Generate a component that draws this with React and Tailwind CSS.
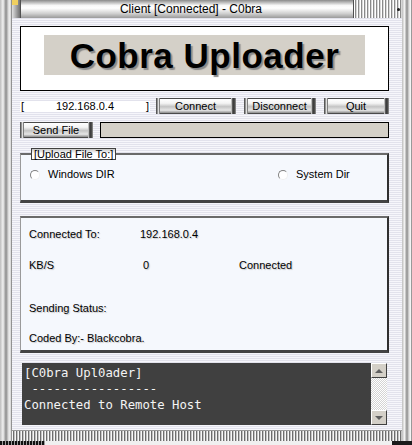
import React from "react";

/* chrome-ish skinned button (caps + gradient body) */
function SkinButton({ label, className }) {
    return (
        <div className={`flex h-[16px] ${className}`}>
            <span className="w-[4px] bg-[linear-gradient(90deg,#3a3a3a,#9a9a9a_40%,#e8e8e8_60%,#505050)]" />
            <span className="flex-1 flex items-center justify-center border-y border-[#4a4a4a] bg-[linear-gradient(#ffffff,#f4f4f4_30%,#c4c4c4_55%,#e6e6e6_80%,#8a8a8a)] text-[11px] leading-none text-black">
                {label}
            </span>
            <span className="w-[5px] bg-[linear-gradient(90deg,#f0f0f0,#5a5a5a_30%,#303030_60%,#9a9a9a)]" />
        </div>
    );
}

function Radio({ label, className = "" }) {
    return (
        <div className={`flex items-center gap-[8px] ${className}`}>
            <span className="w-[10px] h-[10px] rounded-full bg-white border border-t-[#808080] border-l-[#808080] border-r-[#f0f0f0] border-b-[#f0f0f0]" />
            <span className="text-[11px] leading-none text-black">{label}</span>
        </div>
    );
}

export default function App() {
    const sideBorder =
        "bg-[linear-gradient(90deg,#bdbdbd,#f2f2f2_25%,#8c8c8c_50%,#dcdcdc_70%,#f4f4f4_85%,#6c6c6c)]";

    return (
        <div className="w-[412px] h-[445px] flex flex-col bg-[#1a1a1a] overflow-hidden font-['Liberation_Sans',Arial,sans-serif]">
            {/* ===== Title bar ===== */}
            <div className="h-[18px] flex shrink-0">
                <div className={`w-[12px] ${sideBorder}`} />
                <div className="w-[8px] flex flex-col bg-[linear-gradient(90deg,#e0e0e0,#707070)]">
                    <span className="h-[5px] w-[6px] bg-[#f0d060]" />
                </div>
                <div className="flex-1 flex items-center justify-center pl-[8px] border-x border-[#505050] bg-[linear-gradient(#8a8a8a,#f8f8f8_30%,#ffffff_45%,#d0d0d0_75%,#9a9a9a)] text-[12px] leading-none text-black">
                    Client [Connected] - C0bra
                </div>
                <div className="w-[48px] flex items-center justify-end pr-[2px] bg-[repeating-linear-gradient(90deg,#ffffff_0px,#ffffff_1px,#8a8a8a_1px,#8a8a8a_2px,#d8d8d8_2px,#d8d8d8_3px)]">
                    <span className="w-[3px] h-[3px] rounded-full bg-[#202020]" />
                </div>
                <div className={`w-[10px] ${sideBorder}`} />
            </div>

            {/* ===== Body ===== */}
            <div className="h-[423px] flex shrink-0">
                <div className={`w-[12px] ${sideBorder}`} />

                <div className="flex-1 flex flex-col bg-[repeating-linear-gradient(180deg,#e2e2ec_0px,#e2e2ec_1px,#f6f6fb_1px,#f6f6fb_2px)]">
                    <div className="flex flex-col pl-[8px] pr-[13px] pt-[8px]">
                        {/* logo */}
                        <div className="h-[65px] border border-black bg-white flex justify-center pt-[8px]">
                            <div className="w-[321px] h-[40px] bg-[#d4d0c8] flex items-center justify-center">
                                <span className="font-bold text-[35px] leading-none tracking-[0.5px] text-black [text-shadow:2px_2px_1px_#8a8a8a]">
                                    Cobra Uploader
                                </span>
                            </div>
                        </div>

                        {/* ip + buttons */}
                        <div className="mt-[7px] h-[16px] flex items-center">
                            <div className="w-[130px] h-[11px] bg-white flex items-center justify-between text-[11px] leading-none text-black">
                                <span className="pl-[1px]">[</span>
                                <span>192.168.0.4</span>
                                <span className="pr-[1px]">]</span>
                            </div>
                            <SkinButton label="Connect" className="ml-[6px] w-[80px]" />
                            <SkinButton label="Disconnect" className="ml-[8px] w-[72px]" />
                            <SkinButton label="Quit" className="ml-[8px] w-[65px]" />
                        </div>

                        {/* send file */}
                        <div className="mt-[8px] h-[16px] flex">
                            <SkinButton label="Send File" className="w-[73px]" />
                            <div className="ml-[7px] flex-1 bg-[#d4d0c8] border border-black" />
                        </div>

                        {/* upload group */}
                        <div className="mt-[10px] pt-[5px] relative">
                            <div className="h-[50px] bg-[#f5f8fd] border-t-2 border-t-[#6a6a6a] border-l border-l-[#9a9a9a] border-r-2 border-r-[#303030] border-b-[3px] border-b-[#444444] flex items-start pt-[14px] pl-[9px]">
                                <Radio label="Windows DIR" className="w-[248px]" />
                                <Radio label="System Dir" />
                            </div>
                            <div className="absolute top-0 left-[11px] h-[12px] px-[2px] flex items-center border border-[#404040] bg-[linear-gradient(#c8c8c8,#ffffff_45%)] text-[11px] leading-none text-black">
                                [Upload File To:]
                            </div>
                        </div>

                        {/* info */}
                        <div className="mt-[13px] h-[137px] bg-[#f5f8fd] border-t-2 border-t-[#6a6a6a] border-l border-l-[#9a9a9a] border-r-2 border-r-[#303030] border-b-[3px] border-b-[#444444] pl-[8px] pt-[9px] text-[11px] leading-[14px] text-black [text-shadow:1px_1px_1px_#c8c8c8]">
                            <div className="flex">
                                <span className="w-[111px]">Connected To:</span>
                                <span>192.168.0.4</span>
                            </div>
                            <div className="flex mt-[17px]">
                                <span className="w-[114px]">KB/S</span>
                                <span className="w-[96px]">0</span>
                                <span>Connected</span>
                            </div>
                            <div className="mt-[29px]">Sending Status:</div>
                            <div className="mt-[16px]">Coded By:- Blackcobra.</div>
                        </div>

                        {/* log */}
                        <div className="mt-[10px] h-[62px] flex pl-[2px] pr-[2px]">
                            <div className="flex-1 bg-[#404040] pl-[2px] pt-[2px] font-['DejaVu_Sans_Mono',monospace] text-[12.3px] leading-[16px] text-[#f4f4f4] whitespace-pre">
                                <div>[C0bra Upl0ader]</div>
                                <div> -----------------</div>
                                <div>Connected to Remote Host</div>
                            </div>
                            <div className="w-[16px] flex flex-col bg-[repeating-conic-gradient(#d4d4d4_0%_25%,#ffffff_0%_50%)] bg-[length:2px_2px]">
                                <div className="h-[15px] bg-[#d4d0c8] border border-t-white border-l-white border-r-[#404040] border-b-[#404040] flex items-center justify-center">
                                    <span className="w-0 h-0 border-x-[4px] border-x-transparent border-b-[4px] border-b-[#606060]" />
                                </div>
                                <div className="flex-1" />
                                <div className="h-[15px] bg-[#d4d0c8] border border-t-white border-l-white border-r-[#404040] border-b-[#404040] flex items-center justify-center">
                                    <span className="w-0 h-0 border-x-[4px] border-x-transparent border-t-[4px] border-t-[#606060]" />
                                </div>
                            </div>
                        </div>
                    </div>

                    <div className="flex-1" />
                    <div className="h-[11px] bg-[repeating-linear-gradient(90deg,#f8f8f8_0px,#f8f8f8_1px,#6e6e6e_1px,#6e6e6e_2px,#c4c4c4_2px,#c4c4c4_3px)] border-t border-[#9a9a9a]" />
                </div>

                <div className={`w-[10px] ${sideBorder}`} />
            </div>

            {/* bottom edge */}
            <div className="flex-1 flex">
                <div className="w-[45px] bg-[repeating-linear-gradient(90deg,#111111_0px,#111111_2px,#9a9a9a_2px,#9a9a9a_3px)]" />
                <div className="flex-1 bg-[#f0f0f0]" />
                <div className="w-[20px] bg-[#1a1a1a]" />
            </div>
        </div>
    );
}
